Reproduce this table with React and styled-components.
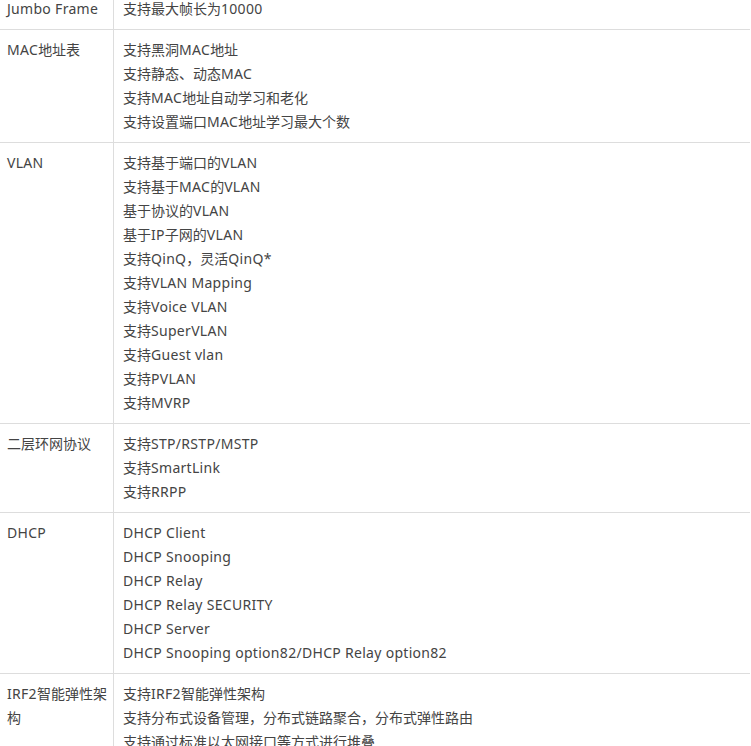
import React from 'react'
import styled, { createGlobalStyle } from 'styled-components'

const Global = createGlobalStyle`
  html, body {
    margin: 0;
    padding: 0;
    background: #fff;
    overflow: hidden;
  }
`;

const Table = styled.div`
  width: 750px;
  margin-top: -11px;
  font-family: "Noto Sans", "Noto Sans CJK SC", sans-serif;
  font-size: 14px;
  line-height: 24px;
  color: #444;
`;

const Row = styled.div`
  display: grid;
  grid-template-columns: 114px 1fr;
  border-bottom: 1px solid #ddd;
`;

const Label = styled.div`
  padding: 8px 4px 8px 7px;
  border-right: 1px solid #ddd;
  word-break: break-all;
`;

const Items = styled.div`
  padding: 8px 9px;
`;

const Item = styled.div`
  white-space: nowrap;
`;

// latin glyphs in the original run a little wider than Noto Sans
const Latin = styled.span`
  letter-spacing: 0.3px;
`;

const Text = ({ children }) =>
  children.split(/([\x20-\x7e]+)/).map((part, i) =>
    /^[\x20-\x7e]+$/.test(part) ? <Latin key={i}>{part}</Latin> : part
  );

const specs = [
  { name: 'Jumbo Frame', items: ['支持最大帧长为10000'] },
  {
    name: 'MAC地址表',
    items: ['支持黑洞MAC地址', '支持静态、动态MAC', '支持MAC地址自动学习和老化', '支持设置端口MAC地址学习最大个数'],
  },
  {
    name: 'VLAN',
    items: [
      '支持基于端口的VLAN',
      '支持基于MAC的VLAN',
      '基于协议的VLAN',
      '基于IP子网的VLAN',
      '支持QinQ，灵活QinQ*',
      '支持VLAN Mapping',
      '支持Voice VLAN',
      '支持SuperVLAN',
      '支持Guest vlan',
      '支持PVLAN',
      '支持MVRP',
    ],
  },
  { name: '二层环网协议', items: ['支持STP/RSTP/MSTP', '支持SmartLink', '支持RRPP'] },
  {
    name: 'DHCP',
    items: [
      'DHCP Client',
      'DHCP Snooping',
      'DHCP Relay',
      'DHCP Relay SECURITY',
      'DHCP Server',
      'DHCP Snooping option82/DHCP Relay option82',
    ],
  },
  {
    name: 'IRF2智能弹性架构',
    items: [
      '支持IRF2智能弹性架构',
      '支持分布式设备管理，分布式链路聚合，分布式弹性路由',
      '支持通过标准以太网接口等方式进行堆叠',
      '支持本地堆叠和远程堆叠',
    ],
  },
];

const App = () => (
  <>
    <Global />
    <Table>
      {specs.map((s) => (
        <Row key={s.name}>
          <Label><Text>{s.name}</Text></Label>
          <Items>
            {s.items.map((it) => (
              <Item key={it}><Text>{it}</Text></Item>
            ))}
          </Items>
        </Row>
      ))}
    </Table>
  </>
)

export default App
